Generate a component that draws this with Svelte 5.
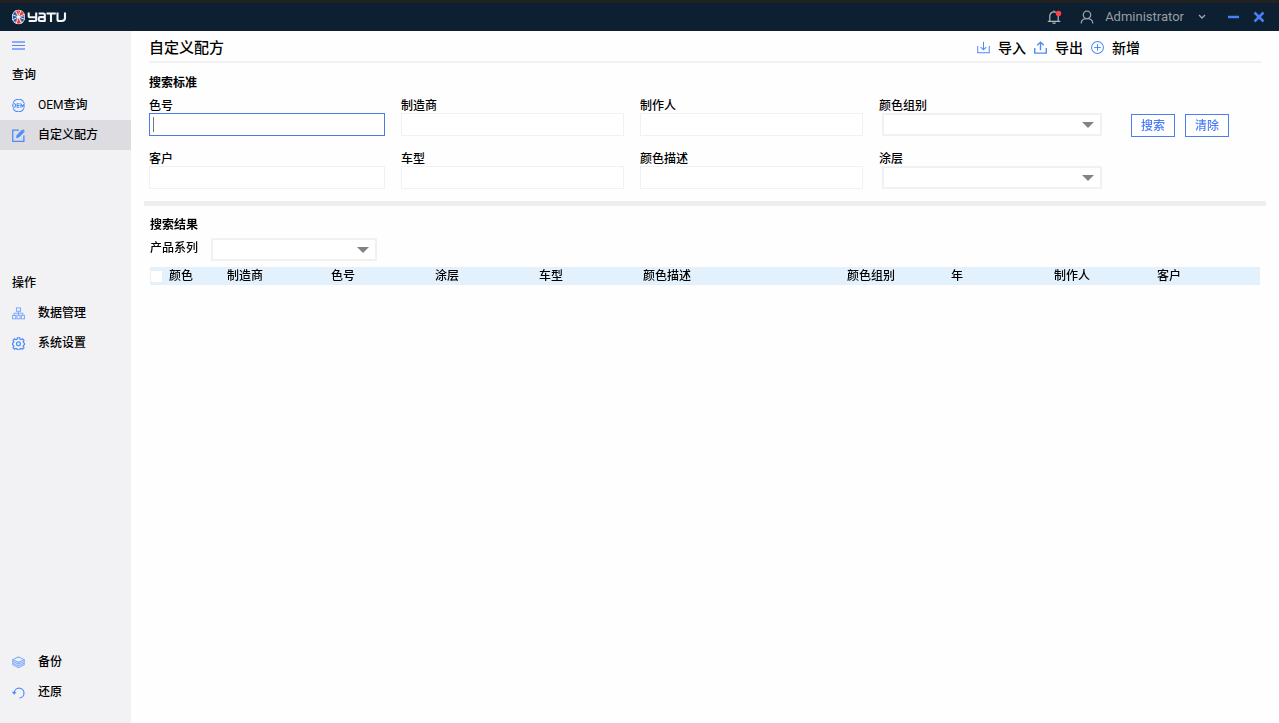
<script>
  let collapsed = $state(false);
  const fields = [
    { id: 'color-no', label: '色号', kind: 'text', focus: true },
    { id: 'maker', label: '制造商', kind: 'text' },
    { id: 'author', label: '制作人', kind: 'text' },
    { id: 'group', label: '颜色组别', kind: 'select' },
    { id: 'customer', label: '客户', kind: 'text' },
    { id: 'model', label: '车型', kind: 'text' },
    { id: 'desc', label: '颜色描述', kind: 'text' },
    { id: 'coat', label: '涂层', kind: 'select' }
  ];
  const columns = ['制造商', '色号', '涂层', '车型', '颜色描述', '颜色组别', '年', '制作人', '客户'];
  const widths = [104, 104, 104, 104, 204, 104, 103, 103, 103];
  const spokes = [0, 45, 90, 135, 180, 225, 270, 315];

  function focusOnMount(node, on) {
    if (on) node.focus();
  }
</script>

{#snippet icon(name)}
  <svg class="icon" viewBox="0 0 14 14" width="13" height="13" fill="none" stroke="currentColor" stroke-width="1.1" aria-hidden="true">
    {#if name === 'oem'}
      <path d="M1.2 4a6.3 6.3 0 0 1 11.6 0M1.2 10a6.3 6.3 0 0 0 11.6 0" />
      <rect x=".7" y="5.2" width="3.2" height="3.6" rx="1.4" />
      <path d="M8 5.2H5.5v3.6H8M5.500 7H8M9.600 9.300V5.300l1.700 2.700L13 5.300v4" />
    {:else if name === 'edit'}
      <path d="M7.500 1.300H.8v12h12V7" stroke-width="1.400" />
      <path d="M4.800 9.400l.7-2.800L10.700 1.400l2 2L7.500 8.700z" fill="currentColor" stroke-width=".8" />
      <path d="M11.400.7l2 2" stroke-width="1.400" />
    {:else if name === 'data'}
      <rect x="4.800" y="1" width="4.400" height="3.600" />
      <rect x=".6" y="9" width="3.400" height="3.700" />
      <rect x="5.300" y="9" width="3.400" height="3.700" />
      <rect x="10" y="9" width="3.400" height="3.700" />
      <path d="M7 4.600V9M2.300 9V6.800h9.400V9" />
    {:else if name === 'gear'}
      <path stroke-width="1.300" d="M5.800.8h2.400l.4 1.600 1.200.5 1.400-.9 1.700 1.700-.9 1.400.5 1.100 1.100.3v1.900l-1.100.4-.5 1.200.9 1.400-1.700 1.700-1.400-.9-1.200.5-.4 1.200H5.800l-.4-1.200-1.200-.5-1.400.9-1.700-1.700.9-1.400-.5-1.200-1.100-.4V6.500l1.100-.3.5-1.100-.9-1.400 1.700-1.700 1.400.9 1.200-.5z" />
      <circle cx="7" cy="7.300" r="2.100" stroke-width="1.300" />
    {:else if name === 'layers'}
      <path d="M7 1l6.200 2.900L7 6.800.8 3.900z" />
      <path d="M.8 3.900v5.500L7 12.600l6.200-3.200V3.900M.8 5.800L7 8.700l6.200-2.900M.8 7.700L7 10.600l6.200-2.900" />
    {:else if name === 'restore'}
      <path d="M2.300 7.500A5.300 5.300 0 1 1 8 12.900" stroke-width="1.300" />
      <path d="M.3 6.500h4.200L2.300 9.200z" fill="currentColor" stroke-width=".5" />
    {:else if name === 'import'}
      <path d="M.8 5.500v7.200h12.400V5.500M7 .8v8.700M4 6.500l3 3 3-3" />
    {:else if name === 'export'}
      <path d="M.8 7.500v5.500h12.400V7.500M7 10V1.200M3.500 4.700L7 1.200l3.500 3.500" stroke-width="1.500" />
    {:else if name === 'plus'}
      <circle cx="7" cy="7" r="6.400" />
      <path d="M7 3.500v7M3.500 7h7" />
    {/if}
  </svg>
{/snippet}

{#snippet dropdown(id)}
  <span class="drop">
    <select {id}><option value=""></option></select>
    <svg viewBox="0 0 12 6" width="12" height="6" aria-hidden="true"><path d="M0 0h12L6 6z" fill="#808488" /></svg>
  </span>
{/snippet}

<div class="shell">
  <header class="titlebar">
    <svg class="logo" viewBox="0 0 56 16" width="56" height="16" role="img" aria-label="YATU">
      <ellipse cx="6.500" cy="8" rx="6.500" ry="7.300" fill="#f3f5f8" />
      <path d="M6.500 8L2.700 2.700a6 6 0 0 1 3.800-1.500z" fill="#e43b42" />
      <path d="M6.500 8V1.200a6 6 0 0 1 5.700 6z" fill="#e43b42" />
      <path d="M6.500 8l5.800-.6a6 6 0 0 1-2 5.500z" fill="#2459ae" />
      <path d="M6.500 8l3.600 5.300a6 6 0 0 1-7.200 0z" fill="#e43b42" />
      <path d="M6.500 8l-3.600 5.200A6 6 0 0 1 .8 8z" fill="#2459ae" />
      <path d="M6.500 8H.8a6 6 0 0 1 2-5.300z" fill="#2459ae" />
      {#each spokes as angle}
        <path d="M6.500 8V1" stroke="#f3f5f8" stroke-width=".8" transform="rotate({angle + 20} 6.500 8)" />
      {/each}
      <circle cx="6.500" cy="8" r="1.300" fill="#f3f5f8" />
      <g fill="none" stroke="#f3f5f8" stroke-width="2.100" stroke-linejoin="round">
        <path d="M16.700 3.500v3.700q0 1.100 1.100 1.100h5.700M24.200 3.500v7.300q0 1.200-1.200 1.200h-6.300" />
        <path d="M26.700 4.500h4.800q1.300 0 1.300 1.200V12h-4.700q-1.300 0-1.300-1.100V9.300q0-1.200 1.300-1.200h4.500" />
        <path d="M34.500 4.500h9.300M39 4.500V13" />
        <path d="M45.500 3.500v7q0 1.500 1.500 1.500h2.500q3.500 0 3.500-3.300V3.500" />
      </g>
    </svg>
    <div class="account">
      <button class="plain bell" aria-label="通知">
        <svg viewBox="0 0 16 16" width="16" height="16" fill="none" stroke="#b1b6bb" stroke-width="1.200">
          <path d="M2.800 12V7a4.200 4.200 0 0 1 8.400 0v5M.8 12.300h12.500M5.500 14.200h3.200M7 1.500v1.300" />
          <circle cx="11.500" cy="4.500" r="2.700" fill="#ff4148" stroke="none" />
        </svg>
      </button>
      <button class="plain user">
        <svg viewBox="0 0 14 14" width="14" height="14" fill="none" stroke="#989da2" stroke-width="1.300">
          <circle cx="7" cy="4.900" r="3.700" /><path d="M1.200 13.500c0-3.300 2.300-4.900 5.800-4.900s5.800 1.600 5.800 4.900" />
        </svg>
        <span>Administrator</span>
        <svg viewBox="0 0 8 6" width="8" height="6" fill="none" stroke="#a4a9ae" stroke-width="1.300"><path d="M1 1l3 3 3-3" /></svg>
      </button>
      <button class="plain min" aria-label="最小化">
        <svg viewBox="0 0 12 12" width="12" height="12" stroke="#4b7df3" stroke-width="2.500"><path d="M1 6h11" /></svg>
      </button>
      <button class="plain close" aria-label="关闭">
        <svg viewBox="0 0 12 12" width="12" height="12" stroke="#4b7df3" stroke-width="2.500"><path d="M1.500 1.500l9 9M10.500 1.500l-9 9" /></svg>
      </button>
    </div>
  </header>

  <div class="body">
    <nav class="sidebar">
      <button class="plain burger" aria-label="菜单" aria-expanded={!collapsed} onclick={() => (collapsed = !collapsed)}>
        <svg viewBox="0 0 13 9" width="13" height="9" fill="none"><path d="M0 1h13M0 8h13" stroke="#8cabf8" stroke-width="2" /><path d="M0 4.500h13" stroke="#5585f5" /></svg>
      </button>
      <h2>查询</h2>
      <a href="#oem">{@render icon('oem')}<span><span class="latin">OEM</span>查询</span></a>
      <a href="#custom" class="active" aria-current="page">{@render icon('edit')}<span>自定义配方</span></a>
      <h2 class="ops">操作</h2>
      <a href="#data" class="soft">{@render icon('data')}<span>数据管理</span></a>
      <a href="#settings">{@render icon('gear')}<span>系统设置</span></a>
      <div class="foot">
        <a href="#backup" class="soft">{@render icon('layers')}<span>备份</span></a>
        <a href="#restore">{@render icon('restore')}<span>还原</span></a>
      </div>
    </nav>

    <main>
      <div class="heading">
        <h1>自定义配方</h1>
        <div class="actions">
          <button class="plain">{@render icon('import')}<span>导入</span></button>
          <button class="plain">{@render icon('export')}<span>导出</span></button>
          <button class="plain">{@render icon('plus')}<span>新增</span></button>
        </div>
      </div>

      <form class="criteria" onsubmit={(e) => e.preventDefault()}>
        <h3>搜索标准</h3>
        <div class="search">
          <div class="grid">
            {#each fields as f}
              <div class="field">
                <label for={f.id}>{f.label}</label>
                {#if f.kind === 'select'}
                  {@render dropdown(f.id)}
                {:else}
                  <input id={f.id} type="text" use:focusOnMount={f.focus} />
                {/if}
              </div>
            {/each}
          </div>
          <div class="buttons">
            <button type="submit">搜索</button>
            <button type="reset">清除</button>
          </div>
        </div>
      </form>

      <section class="results">
        <h3>搜索结果</h3>
        <div class="series">
          <label for="series">产品系列</label>
          {@render dropdown('series')}
        </div>
        <table>
          <colgroup>
            <col style="width: 77px" />
            {#each widths as w}<col style="width: {w}px" />{/each}
          </colgroup>
          <thead>
            <tr>
              <th><label class="pick"><input type="checkbox" />颜色</label></th>
              {#each columns as c}<th>{c}</th>{/each}
            </tr>
          </thead>
        </table>
      </section>
    </main>
  </div>
</div>

<style>
  :global(body) {
    margin: 0;
  }
  .shell {
    display: flex;
    flex-direction: column;
    min-height: 100vh;
    background: #fefefe;
    color: #000;
    font: 500 12px/18px Roboto, "Noto Sans CJK SC", sans-serif;
  }
  .shell * {
    box-sizing: border-box;
  }
  h1, h2, h3 {
    margin: 0;
    font-size: 12px;
  }
  button, input, select {
    font: inherit;
    color: inherit;
    margin: 0;
    border-radius: 0;
  }
  .plain {
    display: flex;
    align-items: center;
    padding: 0;
    border: 0;
    background: none;
  }
  svg {
    display: block;
    flex: none;
  }
  .titlebar {
    display: flex;
    align-items: center;
    justify-content: space-between;
    height: 31px;
    padding: 0 14px 0 12px;
    border-top: 3px solid #222;
    background: #0c2031;
  }
  .account {
    display: flex;
    align-items: center;
  }
  .bell {
    margin-right: 17px;
  }
  .user {
    margin-right: 21px;
    font-size: 13px;
    font-weight: 400;
    color: #989da2;
  }
  .user span {
    margin: 0 14px 0 11px;
  }
  .min {
    margin-right: 14px;
  }
  .body {
    display: flex;
    flex: 1;
  }
  .sidebar {
    display: flex;
    flex-direction: column;
    flex: none;
    width: 131px;
    padding-bottom: 16px;
    background: #f2f2f5;
  }
  .burger {
    height: 29px;
    padding-left: 12px;
  }
  .sidebar h2 {
    padding-left: 12px;
    font-weight: 500;
    line-height: 30px;
  }
  .sidebar .ops {
    margin-top: 118px;
  }
  .sidebar a {
    display: flex;
    align-items: center;
    gap: 13px;
    height: 30px;
    padding-left: 12px;
    color: #000;
    text-decoration: none;
  }
  .sidebar .active {
    background: #dcdce1;
  }
  .latin {
    font-weight: 400;
  }
  .foot {
    margin-top: auto;
  }
  .icon {
    color: #4b8cfa;
  }
  .soft .icon {
    color: #7daafa;
  }
  main {
    flex: 1;
    min-width: 0;
    padding: 0 13px;
  }
  .heading {
    display: flex;
    align-items: center;
    justify-content: space-between;
    height: 32px;
    margin: 0 5px;
    padding-top: 3px;
    border-bottom: 2px solid #f1f1f3;
  }
  h1 {
    font-size: 15px;
    font-weight: 500;
  }
  .actions {
    display: flex;
    gap: 8px;
    margin-right: 121px;
    font-size: 14px;
  }
  .actions button {
    gap: 8px;
  }
  .criteria {
    padding: 10px 5px 12px;
    border-bottom: 5px solid #eee;
  }
  h3 {
    font-weight: 700;
    line-height: 20px;
  }
  .search {
    display: flex;
    align-items: flex-start;
    gap: 29px;
    padding-top: 4px;
  }
  .grid {
    display: grid;
    flex: 1;
    grid-template-columns: 236fr 223fr 223fr 223fr;
    gap: 14px 16px;
  }
  .field {
    display: flex;
    flex-direction: column;
  }
  .field label {
    height: 16px;
    line-height: 18px;
  }
  .field input {
    width: 100%;
    height: 23px;
    padding: 0 3px;
    border: 1px solid #f1f1f1;
    background: #fff;
    outline: 0;
  }
  .field input:focus {
    border-color: #4b7be8;
    caret-color: transparent;
  }
  .field input:focus:placeholder-shown,
  .field input:focus {
    background: linear-gradient(#777, #777) 3px 3px / 1px 15px no-repeat #fff;
  }
  .field .drop {
    margin-left: 3px;
  }
  .drop {
    display: grid;
    align-items: center;
  }
  .drop select,
  .drop svg {
    grid-area: 1 / 1;
  }
  .drop select {
    width: 100%;
    height: 23px;
    border: 2px solid #f1f1f1;
    background: #fff;
    appearance: none;
  }
  .drop svg {
    justify-self: end;
    margin-right: 8px;
    pointer-events: none;
  }
  .buttons {
    display: flex;
    gap: 10px;
    padding: 17px 32px 0 0;
  }
  .buttons button {
    width: 44px;
    height: 23px;
    padding: 0;
    border: 1px solid #4b7df3;
    background: #fff;
    color: #4b7df3;
    line-height: 20px;
  }
  .results {
    padding: 9px 6px 0;
  }
  .series {
    display: flex;
    gap: 13px;
    padding: 3px 0 6px;
  }
  .series .drop {
    width: 166px;
  }
  .series label {
    line-height: 20px;
  }
  table {
    width: 100%;
    table-layout: fixed;
    border-collapse: collapse;
    background: #e3f1fc;
  }
  th {
    height: 18px;
    padding: 0;
    font-weight: 500;
    text-align: left;
    white-space: nowrap;
  }
  .pick {
    display: flex;
    align-items: center;
    gap: 6px;
  }
  .pick input {
    width: 13px;
    height: 13px;
    border: 1px solid #eee;
    background: #fff;
    appearance: none;
  }
</style>
